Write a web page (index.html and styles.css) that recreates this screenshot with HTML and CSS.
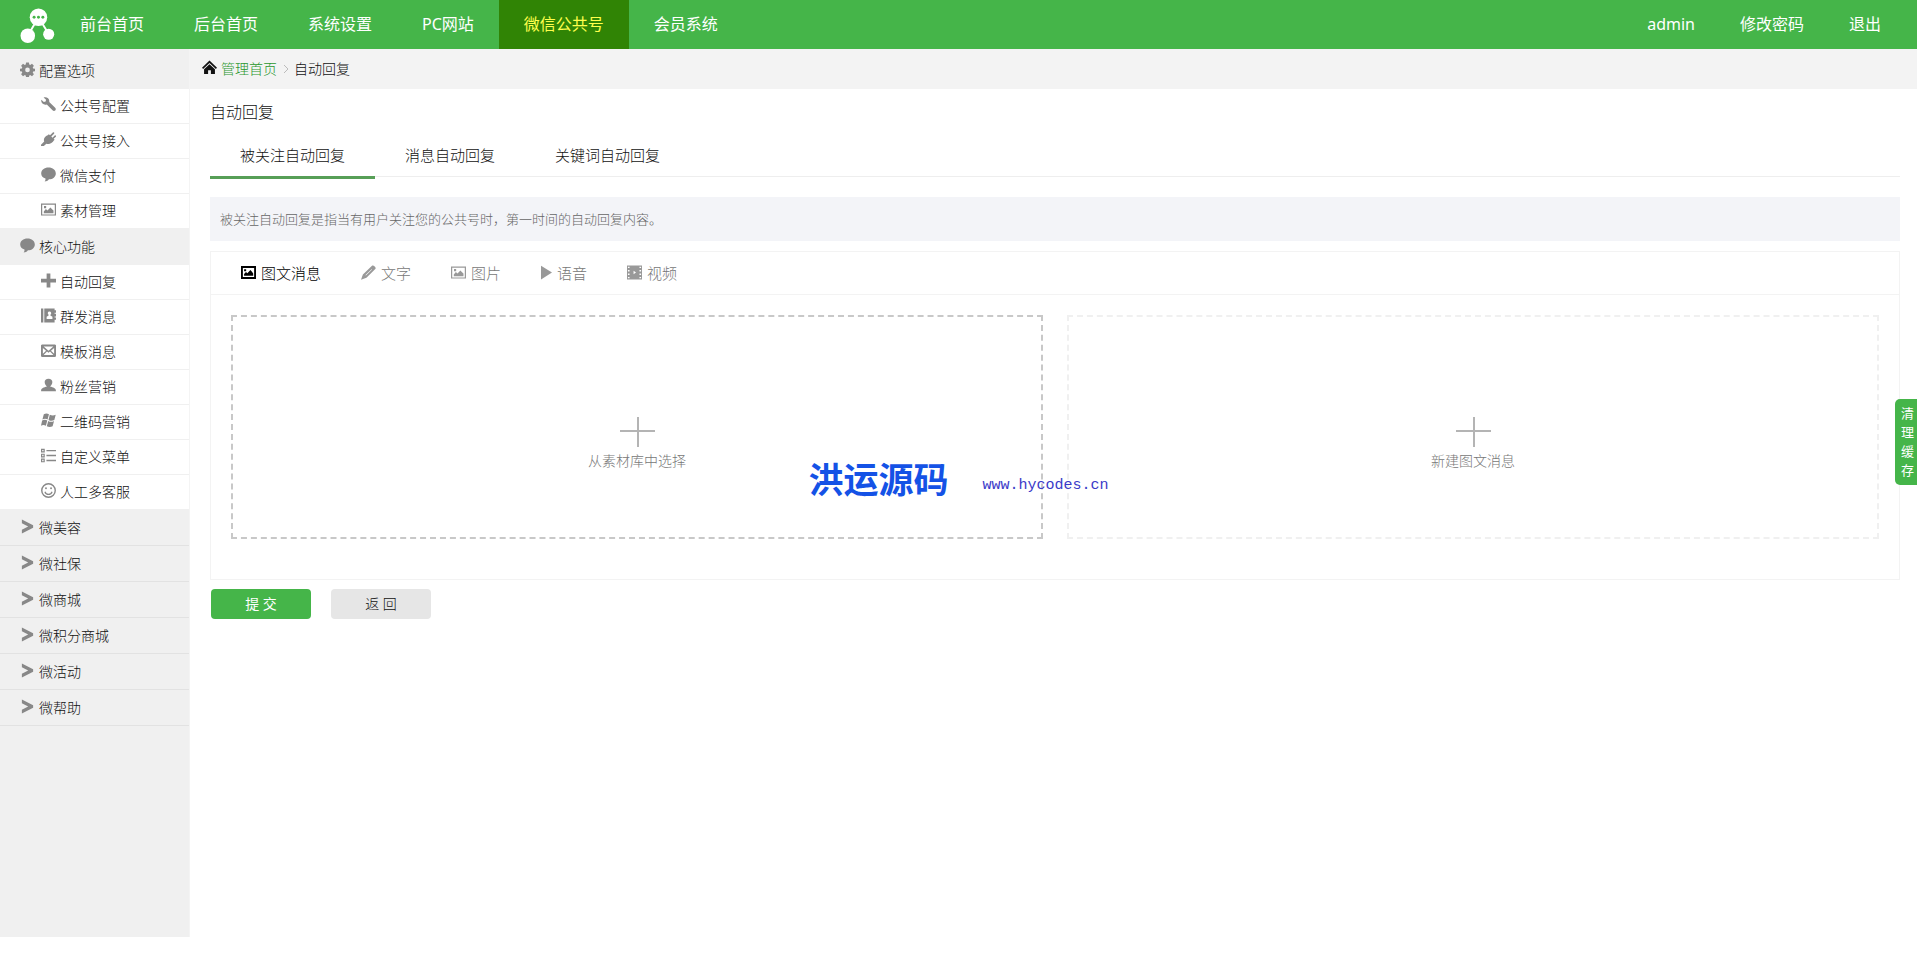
FILE: index.html
```html
<!DOCTYPE html>
<html lang="zh-CN">
<head>
<meta charset="utf-8">
<title>自动回复</title>
<link rel="stylesheet" href="styles.css">
</head>
<body>
<svg class="sprite" aria-hidden="true">
  <symbol id="cog" viewBox="0 0 16 16"><path fill-rule="evenodd" d="M6.500 .5h3l.4 2.200 1 .4 1.900-1.200 2 2-1.200 1.900.4 1 2 .4v2.600l-2 .4-.4 1 1.200 1.900-2 2-1.900-1.200-1 .4-.4 2.200h-3l-.4-2.200-1-.4-1.900 1.200-2-2 1.200-1.900-.4-1-2-.4V7.200l2-.4.4-1-1.200-1.900 2-2 1.900 1.200 1-.4zM8 5.900a2.500 2.500 0 1 0 0 5 2.500 2.500 0 0 0 0-5z"/></symbol>
  <symbol id="wrench" viewBox="0 0 16 16"><path d="M.4 2.800 3 5.400l1.900-.5.500-1.900L2.800.4c3.300-1 6.600 1.300 6 4.800l6.300 6.200c1 1 .8 2.200.1 2.900s-2 .8-2.900-.2L6.200 7.900C2.700 9-.6 6.200.4 2.800z"/></symbol>
  <symbol id="plug" viewBox="0 0 16 16"><path d="m8.400 2.300 1.200 1.200 3-3c1-.8 2.200.4 1.300 1.300l-2.900 3 1.300 1.300 2.300-2.300c.9-.8 2 .4 1.200 1.200l-2.300 2.300 1 1-.8.800c-2 3.200-5.200 4.600-8 3.300L3 15H0v-1.500l3.400-3.400C2.300 7.500 4 4.600 7.100 3.500z"/></symbol>
  <symbol id="comment" viewBox="0 0 16 16"><path d="M8 .5c4.500 0 7.800 2.600 7.800 6.300s-3.200 6.200-7.300 6.200c-1.200 1.500-2.800 2.300-4.600 2.500.8-.9 1-2 .9-3.200C2 11.400.2 9.400.2 6.800.2 3.100 3.500.5 8 .5z"/></symbol>
  <symbol id="picture" viewBox="0 0 16 16"><path fill-rule="evenodd" d="M0 1.500h16v13H0zm1.300 1.300v10.400h13.400V2.800zM3 12v-2l2.200-2.500 1.700 1.500L10 5.800l1.800 1.800L13.300 9v3zM3.200 4.300h2.300v2.300H3.200z"/></symbol>
  <symbol id="picture-bold" viewBox="0 0 16 16"><path fill-rule="evenodd" d="M0 1h16v14H0zm2 2.200v9.600h12V3.200zm1.300 8.200V9.500l2-2 1.500 1.400L10 5.200l1.700 2L13 9v2.400zM3.300 4.400h2.200v2.200H3.300z"/></symbol>
  <symbol id="plus" viewBox="0 0 16 16"><path d="M6 .5h4V6h6v4h-6v5.500H6V10H0V6h6z"/></symbol>
  <symbol id="book" viewBox="0 0 16 16"><path fill-rule="evenodd" d="M0 .5h2.500v15H0zm3.500 0H14.500v2H16V5h-1.500v1H16v3h-1.500v1H16v2.500h-1.500v3h-11zM9 3.700a1.900 1.900 0 0 0-.9 3.500V8L6 9.200v2.500h6.200V9.200L10 8v-.8a1.900 1.900 0 0 0-1-3.500z"/></symbol>
  <symbol id="mail" viewBox="0 0 16 16"><path fill-rule="evenodd" d="M1 1.500h14l1 1V14l-1 1H1l-1-1V2.500zm1.800 2.200L8 8.300l5.200-4.600zM2 5.200v6.300L5.400 8.200zm12 0-3.400 3 3.400 3.300zM6.400 9.100 2.800 12.700h10.400L9.600 9.100 8 10.500z"/></symbol>
  <symbol id="user" viewBox="0 0 16 16"><path d="M8 .7c2.600 0 4.100 1.500 4.100 3.600 0 2.200-1.400 4-2.500 4.700 3.400.9 6.300 1.800 6.300 4.500v.7H.1v-.7C.1 10.800 3 9.900 6.400 9 5.300 8.300 3.900 6.500 3.900 4.300 3.900 2.200 5.400.7 8 .7z"/></symbol>
  <symbol id="windows" viewBox="0 0 16 16"><path d="M3 1.300c2-1.300 4-1 5.500 0L7 7c-1.600-1-3.500-1.200-5.500 0zM9.400 1.900c2 1 4.100 1.100 6.300 0l-1.500 5.600c-2 1.200-4.100 1-6.200-.1zM1.200 8c2-1.200 4-1 5.500 0l-1.500 5.600c-1.500-1-3.500-1.200-5.200 0zM7.700 8.500c2 1.200 4.100 1.200 6.200 0l-1.500 5.700c-2.100 1.100-4.200 1.100-6.200 0z"/></symbol>
  <symbol id="list" viewBox="0 0 16 16"><path fill-rule="evenodd" d="M0 .7h4v4H0zM1.300 2v1.400h1.400V2zM0 6h4v4H0zm1.300 1.300v1.400h1.400V7.300zM0 11.300h4v4H0zm1.300 1.300V14h1.400v-1.400zM5.800 2H16v1.400H5.800zm0 5.300H16v1.400H5.800zm0 5.300H16V14H5.800z"/></symbol>
  <symbol id="smile" viewBox="0 0 16 16"><circle cx="8" cy="8" r="7.200" fill="none" stroke="currentColor" stroke-width="1.500"/><path d="M4.200 9.300C5.500 13.200 10.500 13.200 11.800 9.300" fill="none" stroke="currentColor" stroke-width="1.300"/><circle cx="5.300" cy="5.600" r="1"/><circle cx="10.700" cy="5.600" r="1"/></symbol>
  <symbol id="chevron" viewBox="0 0 16 16"><path d="M2 .5 14 6.700v2.600L2 15.500v-4L8.700 8 2 4.500z"/></symbol>
  <symbol id="home" viewBox="0 0 16 16"><path d="M8 .5 16 8.300 14.800 9.600 8 3.200 1.200 9.600 0 8.300zM8 4.600l5.800 5.300V15H9.500v-4h-3v4H2.200V9.900z"/></symbol>
  <symbol id="pencil" viewBox="0 0 16 16"><path fill-rule="evenodd" d="M12 .6c1.300-.9 4.300 1.900 3.500 3.400L5.800 13.700 0 15.700l2-5.600zM11.300 4.400l-6.500 6.300.4.400 6.600-6.300z"/></symbol>
  <symbol id="play" viewBox="0 0 12 16"><path d="M0 .5 12 8 0 15.500z"/></symbol>
  <symbol id="film" viewBox="0 0 16 16"><path fill-rule="evenodd" d="M0 .5h16v15H0zm1 1.300v1.500h1.700V1.800zm0 3.600v1.500h1.700V5.400zm0 3.700v1.500h1.700V9.100zm0 3.600v1.500h1.700v-1.500zM13.300 1.800v1.500H15V1.800zm0 3.600v1.500H15V5.400zm0 3.700v1.500H15V9.100zm0 3.600v1.500H15v-1.500zM7 6.200v3.600L9.600 8z"/></symbol>
</svg>

<header class="topbar">
  <svg class="logo" viewBox="0 0 36 36" aria-label="logo" role="img">
    <path d="M19 9 8 28M19 9l11 18" stroke="#fff" stroke-width="2"/>
    <circle cx="19" cy="9" r="9" fill="#fff"/><circle cx="8" cy="28" r="7.500" fill="#fff"/><circle cx="29.500" cy="26.500" r="5.700" fill="#fff"/>
    <g fill="#45b549"><circle cx="14.500" cy="9" r="1.500"/><circle cx="19" cy="9" r="1.500"/><circle cx="23.500" cy="9" r="1.500"/></g>
  </svg>
  <nav class="mainnav">
    <a href="#">前台首页</a><a href="#">后台首页</a><a href="#">系统设置</a><a href="#">PC网站</a><a href="#" class="current">微信公共号</a><a href="#">会员系统</a>
  </nav>
  <nav class="usernav"><a href="#">admin</a><a href="#">修改密码</a><a href="#">退出</a></nav>
</header>

<div class="layout">
  <aside class="sidebar">
    <a href="#" class="group open"><svg class="icon"><use href="#cog"/></svg>配置选项</a>
    <ul class="submenu">
      <li><a href="#"><svg class="icon"><use href="#wrench"/></svg>公共号配置</a></li>
      <li><a href="#"><svg class="icon"><use href="#plug"/></svg>公共号接入</a></li>
      <li><a href="#"><svg class="icon"><use href="#comment"/></svg>微信支付</a></li>
      <li><a href="#"><svg class="icon"><use href="#picture"/></svg>素材管理</a></li>
    </ul>
    <a href="#" class="group open"><svg class="icon"><use href="#comment"/></svg>核心功能</a>
    <ul class="submenu">
      <li><a href="#"><svg class="icon"><use href="#plus"/></svg>自动回复</a></li>
      <li><a href="#"><svg class="icon"><use href="#book"/></svg>群发消息</a></li>
      <li><a href="#"><svg class="icon"><use href="#mail"/></svg>模板消息</a></li>
      <li><a href="#"><svg class="icon"><use href="#user"/></svg>粉丝营销</a></li>
      <li><a href="#"><svg class="icon"><use href="#windows"/></svg>二维码营销</a></li>
      <li><a href="#"><svg class="icon"><use href="#list"/></svg>自定义菜单</a></li>
      <li><a href="#"><svg class="icon"><use href="#smile"/></svg>人工多客服</a></li>
    </ul>
    <a href="#" class="group"><svg class="icon"><use href="#chevron"/></svg>微美容</a>
    <a href="#" class="group"><svg class="icon"><use href="#chevron"/></svg>微社保</a>
    <a href="#" class="group"><svg class="icon"><use href="#chevron"/></svg>微商城</a>
    <a href="#" class="group"><svg class="icon"><use href="#chevron"/></svg>微积分商城</a>
    <a href="#" class="group"><svg class="icon"><use href="#chevron"/></svg>微活动</a>
    <a href="#" class="group"><svg class="icon"><use href="#chevron"/></svg>微帮助</a>
  </aside>

  <main class="main">
    <div class="crumbs">
      <svg class="icon"><use href="#home"/></svg>
      <a href="#">管理首页</a>
      <svg class="sep" viewBox="0 0 6 10"><path d="m1 1 4 4-4 4" fill="none" stroke="#bbb"/></svg>
      <span>自动回复</span>
    </div>
    <div class="content">
      <h1>自动回复</h1>
      <nav class="tabs"><a href="#" class="current">被关注自动回复</a><a href="#">消息自动回复</a><a href="#">关键词自动回复</a></nav>
      <p class="notice">被关注自动回复是指当有用户关注您的公共号时，第一时间的自动回复内容。</p>
      <section class="panel">
        <nav class="types">
          <a href="#" class="current"><svg class="icon"><use href="#picture-bold"/></svg>图文消息</a>
          <a href="#"><svg class="icon"><use href="#pencil"/></svg>文字</a>
          <a href="#"><svg class="icon"><use href="#picture"/></svg>图片</a>
          <a href="#"><svg class="icon narrow"><use href="#play"/></svg>语音</a>
          <a href="#"><svg class="icon"><use href="#film"/></svg>视频</a>
        </nav>
        <div class="choices">
          <button type="button" class="choice strong"><svg viewBox="0 0 35 30"><path d="M0 14h35M18 0v30"/></svg>从素材库中选择</button>
          <button type="button" class="choice"><svg viewBox="0 0 35 30"><path d="M0 14h35M18 0v30"/></svg>新建图文消息</button>
        </div>
      </section>
      <div class="actions">
        <button type="submit" class="btn primary">提 交</button>
        <button type="button" class="btn">返 回</button>
      </div>
    </div>
  </main>
</div>

<div class="watermark"><strong>洪运源码</strong><span>www.hycodes.cn</span></div>
<button type="button" class="clear-cache">清理缓存</button>
</body>
</html>
```
FILE: styles.css
```css
* { box-sizing: border-box; }
body {
  margin: 0;
  min-height: 100vh;
  display: flex;
  flex-direction: column;
  background: #fff;
  color: #111;
  font: 14px/20px "Noto Sans", "Noto Sans CJK SC", sans-serif;
  font-weight: 300;
}
a { color: inherit; text-decoration: none; }
button { font: inherit; color: inherit; cursor: pointer; }
.sprite { display: none; }
.icon { flex: none; width: 15px; height: 15px; fill: currentColor; }

.topbar {
  display: flex;
  height: 49px;
  background: #45b549;
  color: #fff;
  font-size: 16px;
  font-weight: 400;
  line-height: 48px;
}
.logo { width: 35px; height: 36px; margin: 8px 0 0 20px; }
.mainnav, .usernav { display: flex; }
.mainnav a { padding: 0 25px; }
.mainnav .current { background: #308405; color: #ffff4d; }
.usernav { margin-left: auto; padding-right: 14px; }
.usernav a { padding: 0 22px 0 23px; }

.layout { flex: 1; display: flex; }
.sidebar {
  width: 190px;
  margin-bottom: 23px;
  padding-top: 4px;
  background: #f0f0f0;
  border-right: 1px solid #f4f4f4;
}
.group, .submenu a {
  display: flex;
  align-items: center;
  gap: 4px;
}
.group { height: 36px; padding-left: 20px; border-bottom: 1px solid #e2e2e2; }
.group.open { border-bottom-color: #f0f0f0; }
.submenu { margin: 0; padding: 0; list-style: none; background: #fff; }
.submenu a { height: 35px; padding: 0 0 1px 41px; border-bottom: 1px solid #f0f0f0; }
.sidebar .icon { color: #888; }
.sidebar .icon, .crumbs .icon, .types .icon { margin-bottom: 2px; }

.main { flex: 1; }
.crumbs {
  display: flex;
  align-items: center;
  height: 40px;
  padding: 0 0 1px 12px;
  background: #f3f3f3;
}
.crumbs a { margin: 0 6px 0 4px; color: #2a972e; }
.sep { width: 6px; height: 10px; margin-right: 5px; }
.content { padding: 11px 17px 0 20px; }
h1 { margin: 0; font-size: 16px; line-height: 24px; font-weight: inherit; }
.tabs {
  display: flex;
  height: 53px;
  border-bottom: 1px solid #eee;
  font-size: 15px;
  line-height: 62px;
}
.tabs a { height: 55px; padding: 0 30px; }
.tabs .current { border-bottom: 3px solid #579f57; }
.notice {
  margin: 20px 0 10px;
  padding: 12px 10px;
  background: #f3f4f8;
  color: #666;
  font-size: 13px;
}
.panel { border: 1px solid #f3f3f3; }
.types {
  display: flex;
  gap: 40px;
  height: 43px;
  padding-left: 30px;
  border-bottom: 1px solid #f3f3f3;
  color: #777;
  font-size: 15px;
}
.types a { display: flex; align-items: center; gap: 5px; }
.types .icon { color: #999; }
.types .current, .types .current .icon { color: #000; }
.types .narrow { width: 11px; }
.choices {
  display: grid;
  grid-template-columns: 1fr 1fr;
  gap: 24px;
  padding: 20px 20px 40px;
}
.choice {
  display: flex;
  flex-direction: column;
  align-items: center;
  justify-content: center;
  gap: 4px;
  height: 224px;
  padding: 34px 0 0;
  border: 2px dashed #f0f0f0;
  background: none;
  color: #777;
}
.choice.strong { border-color: #c8c8c8; }
.choice svg { width: 35px; height: 30px; stroke: #b4b4b4; stroke-width: 2; }
.actions { display: flex; gap: 20px; padding: 9px 1px; }
.btn {
  width: 100px;
  height: 30px;
  padding: 0;
  border: 0;
  border-radius: 4px;
  background: #e6e6e6;
}
.btn.primary { background: #45b549; color: #fff; font-weight: 400; }

.watermark {
  position: absolute;
  top: 480px;
  left: 50%;
  display: flex;
  align-items: center;
  gap: 34px;
  transform: translate(-50%, -50%);
  white-space: nowrap;
}
.watermark strong { color: #1452e6; font-size: 35px; font-weight: 700; line-height: 36px; }
.watermark span { padding-top: 12px; color: #3a3ac8; font: 15px/20px "Liberation Mono", monospace; }
.clear-cache {
  position: fixed;
  top: 399px;
  right: 0;
  width: 22px;
  padding: 5px 3px 5px 6px;
  border: 0;
  border-radius: 5px 0 0 5px;
  background: #45b549;
  color: #fff;
  font-size: 13px;
  font-weight: 400;
  line-height: 19px;
}
```
